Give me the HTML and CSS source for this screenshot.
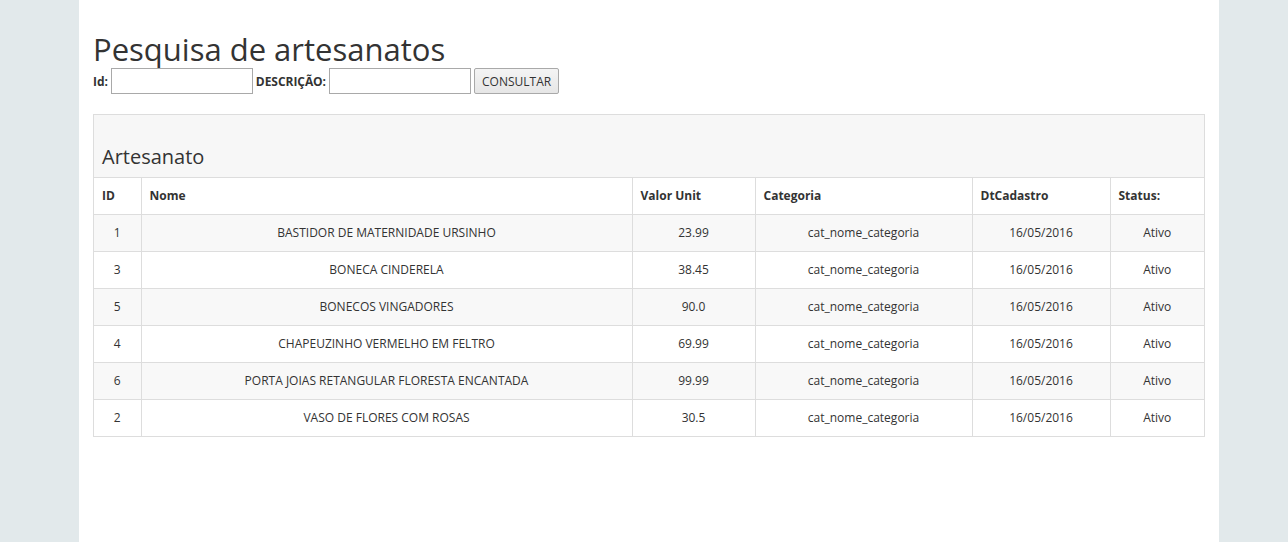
FILE: index.html
```html
<!DOCTYPE html>
<html lang="pt">
<head>
<meta charset="utf-8">
<title>Pesquisa de artesanatos</title>
<link rel="stylesheet" href="styles.css">
</head>
<body>
<div class="container">
  <h1 class="title">Pesquisa de artesanatos</h1>
  <form class="search">
    <label class="lbl">Id:</label>
    <input class="field" type="text">
    <label class="lbl">DESCRIÇÃO:</label>
    <input class="field" type="text">
    <button class="btn" type="button">CONSULTAR</button>
  </form>
  <div class="panel">
    <div class="panel-heading"><h3 class="panel-title">Artesanato</h3></div>
    <table class="grid">
      <colgroup>
        <col class="c-id"><col class="c-nome"><col class="c-valor"><col class="c-cat"><col class="c-dt"><col class="c-st">
      </colgroup>
      <thead>
        <tr><th>ID</th><th>Nome</th><th>Valor Unit</th><th>Categoria</th><th>DtCadastro</th><th>Status:</th></tr>
      </thead>
      <tbody>
        <tr><td>1</td><td>BASTIDOR DE MATERNIDADE URSINHO</td><td>23.99</td><td>cat_nome_categoria</td><td>16/05/2016</td><td>Ativo</td></tr>
        <tr><td>3</td><td>BONECA CINDERELA</td><td>38.45</td><td>cat_nome_categoria</td><td>16/05/2016</td><td>Ativo</td></tr>
        <tr><td>5</td><td>BONECOS VINGADORES</td><td>90.0</td><td>cat_nome_categoria</td><td>16/05/2016</td><td>Ativo</td></tr>
        <tr><td>4</td><td>CHAPEUZINHO VERMELHO EM FELTRO</td><td>69.99</td><td>cat_nome_categoria</td><td>16/05/2016</td><td>Ativo</td></tr>
        <tr><td>6</td><td>PORTA JOIAS RETANGULAR FLORESTA ENCANTADA</td><td>99.99</td><td>cat_nome_categoria</td><td>16/05/2016</td><td>Ativo</td></tr>
        <tr><td>2</td><td>VASO DE FLORES COM ROSAS</td><td>30.5</td><td>cat_nome_categoria</td><td>16/05/2016</td><td>Ativo</td></tr>
      </tbody>
    </table>
  </div>
</div>
</body>
</html>
```
FILE: styles.css
```css
html, body {
  margin: 0;
  padding: 0;
  height: 100%;
}
body {
  background-color: #e2e9eb;
  font-family: "Open Sans", "Noto Sans", sans-serif;
  font-size: 13px;
  color: #333;
}
.container {
  width: 1140px;
  margin: 0 0 0 79px;
  min-height: 100%;
  background: #fff;
  padding: 30px 14px 20px;
  box-sizing: border-box;
}
.title {
  margin: 0;
  font-weight: 400;
  font-size: 31px;
  line-height: 38px;
  color: #333;
}
.search {
  display: flex;
  align-items: center;
  gap: 3px;
  margin: 0;
  height: 26px;
}
.lbl {
  font-weight: 700;
  font-size: 12px;
  letter-spacing: -0.05px;
  color: #333;
}
.field {
  width: 142px;
  height: 26px;
  box-sizing: border-box;
  border: 1px solid #a9a9a9;
  margin: 0;
  padding: 2px;
}
.btn {
  height: 26px;
  box-sizing: border-box;
  margin: 0;
  padding: 0 7px;
  font-family: "Open Sans", "Noto Sans", sans-serif;
  font-size: 12px;
  color: #333;
  border: 1px solid #a9a9a9;
  border-radius: 2px;
  background: linear-gradient(#f4f4f4, #e6e6e6);
}
.panel {
  margin-top: 20px;
  border: 1px solid #ddd;
  background: #fff;
}
.panel-heading {
  background: #f7f7f7;
  height: 63px;
  display: flex;
  align-items: flex-end;
  padding: 0 8px 8px;
  box-sizing: border-box;
  border-bottom: 1px solid #ddd;
}
.panel-title {
  margin: 0;
  font-size: 20px;
  font-weight: 400;
  line-height: 24px;
  color: #333;
}
.grid {
  width: 100%;
  border-collapse: collapse;
  table-layout: fixed;
}
.c-id { width: 47px; }
.c-nome { width: 491px; }
.c-valor { width: 123px; }
.c-cat { width: 217px; }
.c-dt { width: 138px; }
.c-st { width: auto; }
.grid th, .grid td {
  height: 37px;
  box-sizing: border-box;
  padding: 0 8px;
  border: 1px solid #ddd;
  font-size: 12px;
  line-height: 18px;
}
.grid tr > :first-child { border-left: 0; }
.grid tr > :last-child { border-right: 0; }
.grid tbody tr:last-child td { border-bottom: 0; }
.grid th {
  height: 36px;
  text-align: left;
  font-weight: 700;
  border-top: 0;
}
.grid td {
  text-align: center;
}
.grid tbody tr:nth-child(odd) {
  background: #f8f8f8;
}
```
